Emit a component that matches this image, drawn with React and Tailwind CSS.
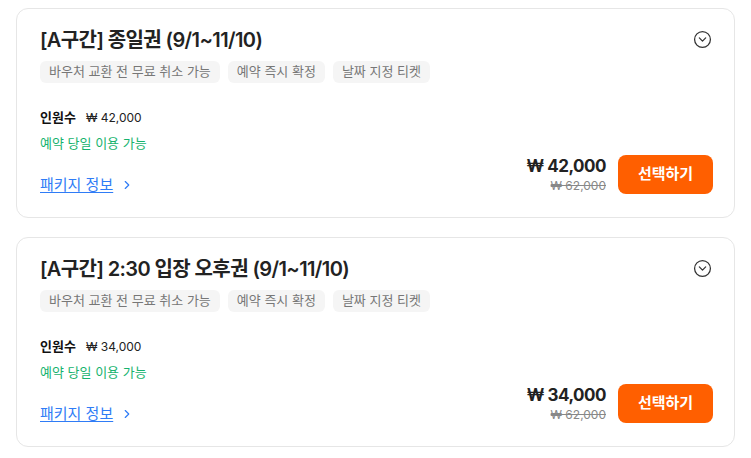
import { CircleChevronDown, ChevronRight } from "lucide-react";

const items = [
  { title: "[A구간] 종일권 (9/1~11/10)", unit: "₩ 42,000", price: "₩ 42,000", original: "₩ 62,000" },
  { title: "[A구간] 2:30 입장 오후권 (9/1~11/10)", unit: "₩ 34,000", price: "₩ 34,000", original: "₩ 62,000" },
];

const tags = ["바우처 교환 전 무료 취소 가능", "예약 즉시 확정", "날짜 지정 티켓"];

function TicketCard({ item }) {
  return (
    <div className="rounded-xl border border-[#e6e6e6] bg-white pl-[23px] pr-[21px] pt-[17px] pb-[22px]">
      <div className="flex items-center justify-between">
        <h3 className="text-[20px] leading-7 font-semibold text-[#222] tracking-[-0.6px]">{item.title}</h3>
        <CircleChevronDown size={19} strokeWidth={1.6} className="text-[#333] -mt-[2px] mr-[1px]" />
      </div>

      <div className="mt-[7px] flex gap-2">
        {tags.map((t) => (
          <span
            key={t}
            className="h-[22px] flex items-center rounded-md bg-[#f5f5f5] px-[9px] text-[13px] text-[#777]"
          >
            {t}
          </span>
        ))}
      </div>

      <div className="mt-[26px] flex items-end justify-between">
        <div className="flex flex-col">
          <div className="flex items-center h-[18px] gap-[10px]">
            <span className="text-[13px] font-bold text-[#111]">인원수</span>
            <span className="text-[12px] text-[#222]">{item.unit}</span>
          </div>
          <div className="mt-2 h-[18px] flex items-center text-[13px] text-[#16b36e]">
            예약 당일 이용 가능
          </div>
          <a href="#" className="mt-[22px] h-5 flex items-center gap-[7px] text-[#2f7cf6]">
            <span className="text-[15px] underline underline-offset-2">패키지 정보</span>
            <ChevronRight size={14} strokeWidth={2} />
          </a>
        </div>

        <div className="flex items-center gap-3 mb-[1px]">
          <div className="flex flex-col items-end">
            <span className="text-[17px] leading-6 font-bold text-[#222] tracking-[-0.5px]">{item.price}</span>
            <span className="text-[12px] leading-4 text-[#888] line-through">{item.original}</span>
          </div>
          <button className="h-[39px] w-[95px] rounded-lg bg-[#ff5f00] text-[15px] font-bold text-white">
            선택하기
          </button>
        </div>
      </div>
    </div>
  );
}

export default function App() {
  return (
    <div
      className="min-h-screen bg-white px-4 pt-2 flex flex-col gap-[19px]"
      style={{ fontFamily: '"Inter", "Noto Sans CJK KR", sans-serif' }}
    >
      {items.map((item) => (
        <TicketCard key={item.title} item={item} />
      ))}
    </div>
  );
}
